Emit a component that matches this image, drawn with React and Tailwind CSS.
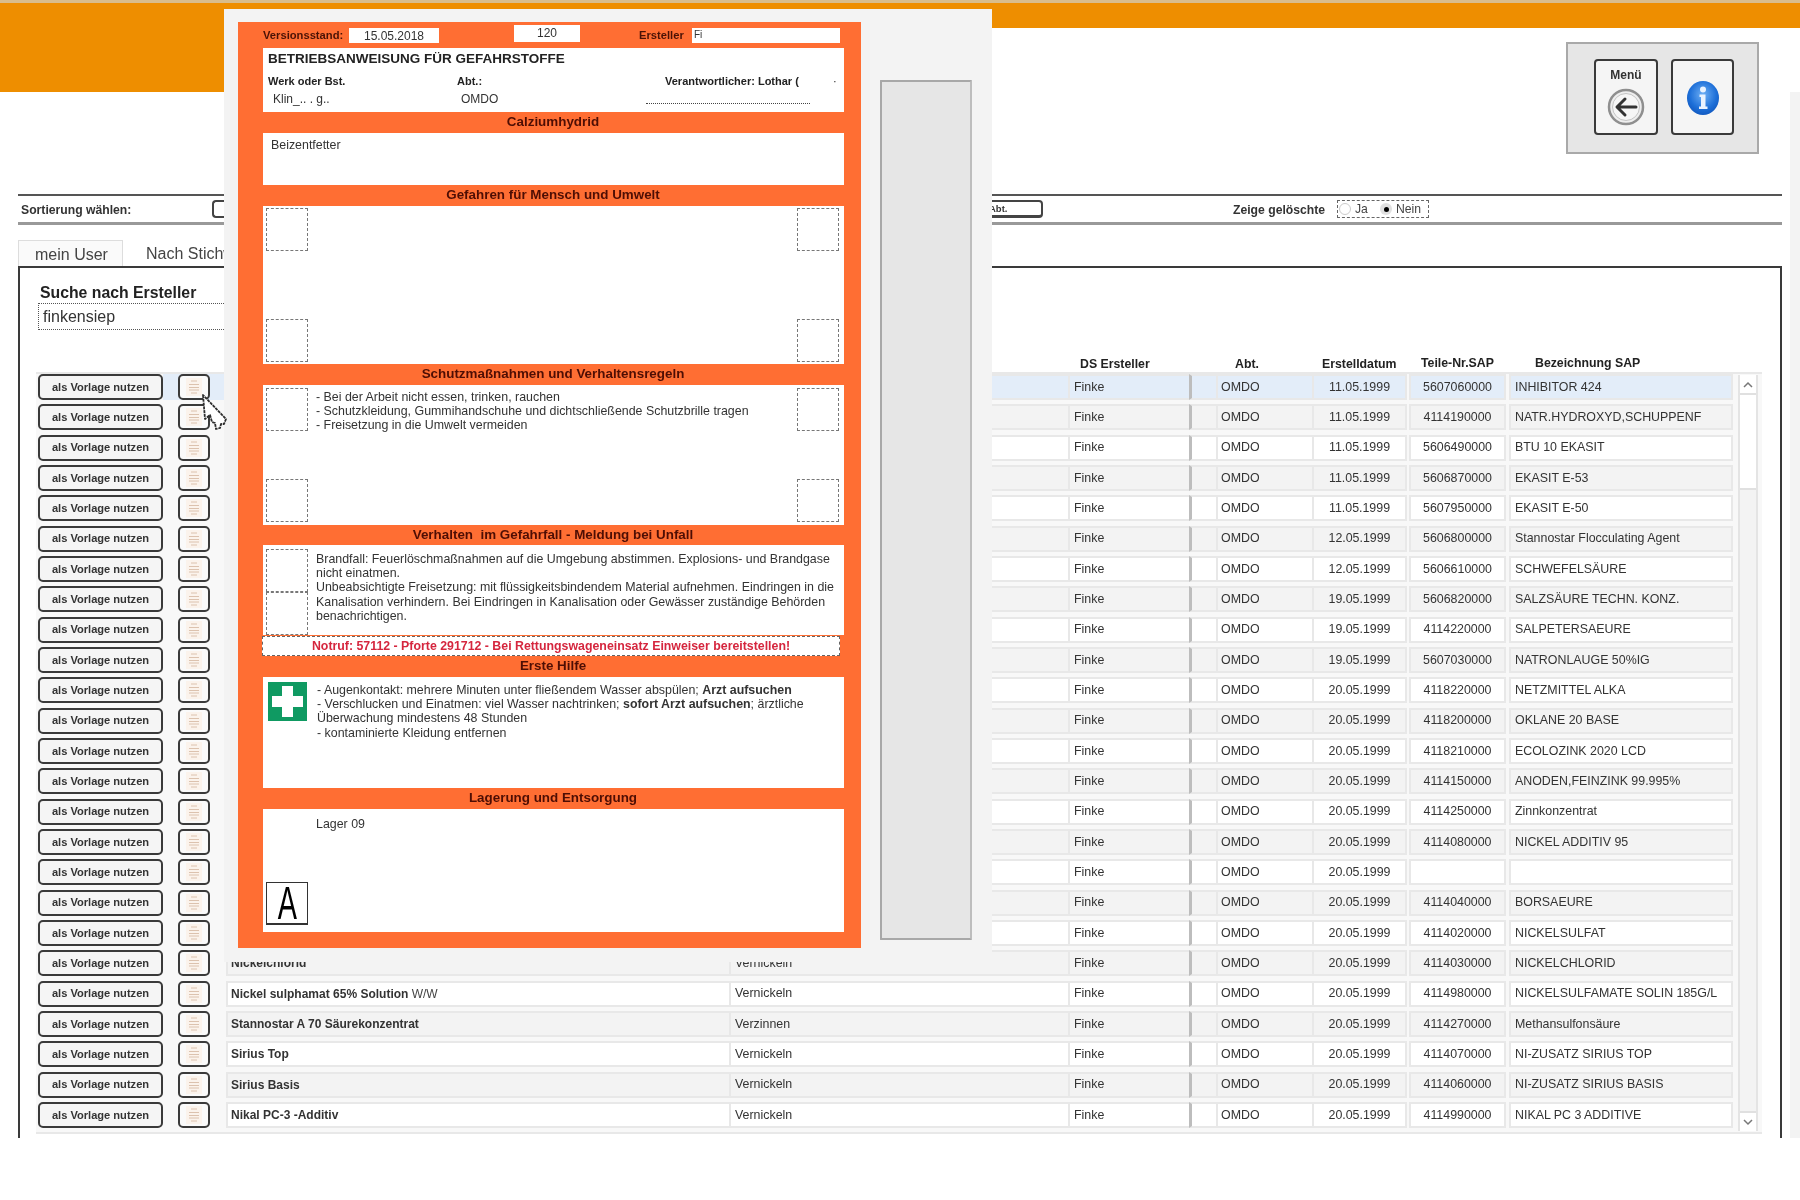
const data = [
  ["11.05.1999","5607060000","INHIBITOR 424"],
  ["11.05.1999","4114190000","NATR.HYDROXYD,SCHUPPENF"],
  ["11.05.1999","5606490000","BTU 10 EKASIT"],
  ["11.05.1999","5606870000","EKASIT E-53"],
  ["11.05.1999","5607950000","EKASIT E-50"],
  ["12.05.1999","5606800000","Stannostar Flocculating Agent"],
  ["12.05.1999","5606610000","SCHWEFELSÄURE"],
  ["19.05.1999","5606820000","SALZSÄURE TECHN. KONZ."],
  ["19.05.1999","4114220000","SALPETERSAEURE"],
  ["19.05.1999","5607030000","NATRONLAUGE 50%IG"],
  ["20.05.1999","4118220000","NETZMITTEL ALKA"],
  ["20.05.1999","4118200000","OKLANE 20 BASE"],
  ["20.05.1999","4118210000","ECOLOZINK 2020 LCD"],
  ["20.05.1999","4114150000","ANODEN,FEINZINK 99.995%"],
  ["20.05.1999","4114250000","Zinnkonzentrat"],
  ["20.05.1999","4114080000","NICKEL ADDITIV 95"],
  ["20.05.1999","",""],
  ["20.05.1999","4114040000","BORSAEURE"],
  ["20.05.1999","4114020000","NICKELSULFAT"],
  ["20.05.1999","4114030000","NICKELCHLORID","Nickelchlorid","","Vernickeln"],
  ["20.05.1999","4114980000","NICKELSULFAMATE SOLIN 185G/L","Nickel sulphamat 65% Solution"," W/W","Vernickeln"],
  ["20.05.1999","4114270000","Methansulfonsäure","Stannostar A 70 Säurekonzentrat","","Verzinnen"],
  ["20.05.1999","4114070000","NI-ZUSATZ SIRIUS TOP","Sirius Top","","Vernickeln"],
  ["20.05.1999","4114060000","NI-ZUSATZ SIRIUS BASIS","Sirius Basis","","Vernickeln"],
  ["20.05.1999","4114990000","NIKAL PC 3 ADDITIVE","Nikal PC-3 -Additiv","","Vernickeln"],
];

const font = { fontFamily: '"Liberation Sans", Arial, sans-serif' };

function DocIcon() {
  return (
    <svg width="16" height="18" viewBox="0 0 16 18" fill="none" stroke="#dcc2ae" strokeWidth="1">
      <rect x="0" y="0" width="16" height="18" fill="#fbf3ec" stroke="none" />
      <path d="M5 3h6M3 6.5h10M3 9.5h10M3 12h10M5 15h6" />
    </svg>
  );
}

function BackIcon() {
  return (
    <svg width="38" height="38" viewBox="0 0 38 38" fill="none">
      <circle cx="19" cy="19" r="17" fill="#eeeeee" stroke="#8f8f8f" strokeWidth="2.5" />
      <circle cx="19" cy="19" r="13.5" fill="#f6f6f6" stroke="#c4c4c4" strokeWidth="1" />
      <path d="M29 19H11M18 11l-8 8 8 8" stroke="#333333" strokeWidth="3" strokeLinecap="round" strokeLinejoin="round" />
    </svg>
  );
}

function InfoIcon() {
  return (
    <svg width="34" height="36" viewBox="0 0 34 36">
      <defs>
        <radialGradient id="infoBlue" cx="50%" cy="40%" r="70%">
          <stop offset="0%" stopColor="#6fb0f5" />
          <stop offset="60%" stopColor="#1d6fd8" />
          <stop offset="100%" stopColor="#0d4fb5" />
        </radialGradient>
      </defs>
      <ellipse cx="17" cy="18" rx="16" ry="17" fill="url(#infoBlue)" />
      <circle cx="17" cy="9.5" r="3" fill="#eaf3ff" />
      <path d="M13.5 14.500h6v12h2V29h-8.500v-2.500h2V17h-1.500z" fill="#eaf3ff" />
    </svg>
  );
}

function Cursor() {
  return (
    <svg width="26" height="38" viewBox="0 0 26 38" fill="#ffffff" stroke="#2e2e2e" strokeWidth="1.800" strokeDasharray="3 0.800" strokeLinejoin="round">
      <path d="M1 1l2 24 5-4 2 7 3 1 1 6 4-1 1-4 3 0 2-5z" />
    </svg>
  );
}

function Cross() {
  return (
    <svg width="39" height="39" viewBox="0 0 39 39">
      <rect width="39" height="39" fill="#0f9a62" />
      <path d="M14 4h11v10h10v11H25v10H14V25H4V14h10z" fill="#ffffff" />
    </svg>
  );
}

const Box = ({ children, solid }) => (
  <div className={`w-[42px] h-[43px] shrink-0 flex items-center justify-center border border-dashed ${solid ? "border-[#555]" : "border-[#777]"}`}>
    {children}
  </div>
);

const Title = ({ children, h = "h-[21px]" }) => (
  <div className={`${h} -ml-[1px] flex items-center justify-center font-bold text-[13.400px] text-[#4e0e04]`}>{children}</div>
);

const Line = ({ children }) => <div className="h-[14.200px] leading-[14.200px] whitespace-nowrap">{children}</div>;

function Sheet() {
  return (
    <div className="w-[623px] h-[926px] mt-[13px] ml-[14px] shrink-0 bg-[#ff6e33] pl-[25px] pr-[17px] text-[12.400px] text-[#333]">
      <div className="h-[26px] relative flex items-center font-bold text-[11.200px] text-[#4a1206]">
        <span className="w-[86px] whitespace-nowrap">Versionsstand:</span>
        <span className="w-[90px] h-[15px] bg-white text-center text-[#333] font-normal text-[12px] leading-[17px]">15.05.2018</span>
        <span className="w-[75px]" />
        <span className="w-[66px] h-[17px] -mt-[3px] bg-white text-center text-[#333] font-normal text-[12px] leading-[16px]">120</span>
        <span className="w-[59px]" />
        <span className="w-[53px]">Ersteller</span>
        <span className="w-[148px] h-[15px] bg-white text-[#333] font-normal text-[10px] leading-[13px] pl-[2px]">Fi</span>
      </div>
      <div className="h-[64px] bg-white pl-[5px] pr-[4px]">
        <div className="font-bold text-[13.500px] leading-[22px] text-[#222]">BETRIEBSANWEISUNG FÜR GEFAHRSTOFFE</div>
        <div className="flex font-bold text-[11px] mt-[4px] leading-[14px] text-[#222]">
          <span className="w-[189px]">Werk oder Bst.</span>
          <span className="w-[208px]">Abt.:</span>
          <span className="w-[140px] whitespace-nowrap">Verantwortlicher: Lothar (</span>
          <span className="ml-[28px] font-normal">·</span>
        </div>
        <div className="flex text-[12px] leading-[18px] mt-[2px] pl-[5px]">
          <span className="w-[188px]">Klin_.. . g..</span>
          <span className="w-[185px]">OMDO</span>
          <span className="w-[164px] h-[14px] border-b border-dotted border-[#444]" />
        </div>
      </div>

      <Title>Calziumhydrid</Title>
      <div className="h-[52px] bg-white pl-[8px] pt-[5px] leading-[14px]">Beizentfetter</div>

      <Title>Gefahren für Mensch und Umwelt</Title>
      <div className="h-[158px] bg-white flex justify-between px-[3px] py-[2px]">
        <div className="flex flex-col justify-between"><Box /><Box /></div>
        <div className="flex flex-col justify-between mr-[2px]"><Box /><Box /></div>
      </div>

      <Title>Schutzmaßnahmen und Verhaltensregeln</Title>
      <div className="h-[140px] bg-white flex justify-between px-[3px] py-[3px]">
        <div className="flex flex-col justify-between"><Box /><Box /></div>
        <div className="flex-1 pl-[8px] pt-[2px]">
          <Line>- Bei der Arbeit nicht essen, trinken, rauchen</Line>
          <Line>- Schutzkleidung, Gummihandschuhe und dichtschließende Schutzbrille tragen</Line>
          <Line>- Freisetzung in die Umwelt vermeiden</Line>
        </div>
        <div className="flex flex-col justify-between mr-[2px]"><Box /><Box /></div>
      </div>

      <Title h="h-[20px]">Verhalten&nbsp; im Gefahrfall - Meldung bei Unfall</Title>
      <div className="h-[90px] bg-white flex px-[3px] pt-[4px]">
        <div className="flex flex-col"><Box /><Box /></div>
        <div className="flex-1 pl-[8px] pt-[3px]">
          <Line>Brandfall: Feuerlöschmaßnahmen auf die Umgebung abstimmen. Explosions- und Brandgase</Line>
          <Line>nicht einatmen.</Line>
          <Line>Unbeabsichtigte Freisetzung: mit flüssigkeitsbindendem Material aufnehmen. Eindringen in die</Line>
          <Line>Kanalisation verhindern. Bei Eindringen in Kanalisation oder Gewässer zuständige Behörden</Line>
          <Line>benachrichtigen.</Line>
        </div>
      </div>
      <div className="h-[20px] -ml-[1px] mr-[4px] mt-[1px] bg-white border border-dashed border-[#666] flex items-center justify-center font-bold text-[12.350px] text-[#d5263e]">
        Notruf: 57112 - Pforte 291712 - Bei Rettungswageneinsatz Einweiser bereitstellen!
      </div>

      <Title>Erste Hilfe</Title>
      <div className="h-[111px] bg-white flex pl-[5px] pt-[5px]">
        <Cross />
        <div className="pl-[10px] pt-[1px]">
          <Line>- Augenkontakt: mehrere Minuten unter fließendem Wasser abspülen; <b>Arzt aufsuchen</b></Line>
          <Line>- Verschlucken und Einatmen: viel Wasser nachtrinken; <b>sofort Arzt aufsuchen</b>; ärztliche</Line>
          <Line>Überwachung mindestens 48 Stunden</Line>
          <Line>- kontaminierte Kleidung entfernen</Line>
        </div>
      </div>

      <Title>Lagerung und Entsorgung</Title>
      <div className="h-[123px] bg-white pl-[3px] pt-[6px] flex flex-col justify-between pb-[7px]">
        <div className="pl-[50px]">Lager 09</div>
        <div className="w-[42px] h-[43px] border border-[#333] border-b-2 flex items-center justify-center text-[40px] leading-[40px] text-black font-normal">
          <span className="scale-x-[0.72] scale-y-[1.15]">A</span>
        </div>
      </div>
    </div>
  );
}

function Modal() {
  return (
    <div className="absolute left-[224px] top-[9px] w-[768px] h-[953px] bg-[#f3f3f3] flex z-10">
      <Sheet />
      <div className="ml-[19px] mt-[71px] w-[92px] h-[860px] bg-[#e6e6e6] border-2 border-[#a8a8a8] border-r-[#bdbdbd] rounded-[1px]" />
    </div>
  );
}

const cols = "grid grid-cols-[125px_63px_503px_339px_121px_27px_96px_95px_2px_97px_3px_224px]";

function Row({ d, i }) {
  const sel = i === 0;
  const bg = sel ? "bg-[#e3edf9]" : i % 2 ? "bg-[#f3f3f3]" : "bg-white";
  const cell = `${bg} border-y-2 border-[#e8e8e8] flex items-center text-[12.400px] text-[#333] whitespace-nowrap overflow-hidden`;
  return (
    <div className={`${cols} h-[26px]`}>
      <button className="h-[26px] w-[125px] rounded-[5px] border-2 border-[#3a3a3a] bg-[#f5f5f5] font-bold text-[11.100px] text-[#333]">als Vorlage nutzen</button>
      <div className={`flex items-center pl-[15px] ${sel ? "bg-[#e3edf9]" : ""}`}>
        <div className="w-[32px] h-[26px] rounded-[5px] border-2 border-[#3a3a3a] bg-[#fafafa] flex items-center justify-center">
          <DocIcon />
        </div>
      </div>
      <div className={`${cell} border-l-2 pl-[3px] font-bold text-[12px] text-[#222]`}>
        {d[3]}<span className="font-normal text-[#444] whitespace-pre">{d[4]}</span>
      </div>
      <div className={`${cell} border-l-2 pl-[4px]`}>{d[5]}</div>
      <div className={`${cell} border-l-2 pl-[4px]`}>Finke</div>
      <div className={`${cell} border-l-[3px] border-l-[#bdbdbd]`} />
      <div className={`${cell} border-l-2 pl-[3px]`}>OMDO</div>
      <div className={`${cell} border-x-2 justify-center`}>{d[0]}</div>
      <div />
      <div className={`${cell} border-x-2 justify-center`}>{d[1]}</div>
      <div />
      <div className={`${cell} border-x-2 pl-[4px]`}>{d[2]}</div>
    </div>
  );
}

function Scrollbar() {
  return (
    <div className="w-[20px] ml-[5px] h-[756px] mt-[1px] flex flex-col border-x-2 border-[#e4e4e4] text-[#666]">
      <div className="h-[20px] bg-white border-b-2 border-[#e0e0e0] flex items-center justify-center">
        <svg width="10" height="7" viewBox="0 0 10 7" fill="none" stroke="#777" strokeWidth="1.500"><path d="M1 6l4-4 4 4" /></svg>
      </div>
      <div className="h-[95px] bg-white border-b-2 border-[#e0e0e0]" />
      <div className="flex-1 bg-[#f3f3f3]" />
      <div className="h-[20px] bg-white border-t-2 border-[#e0e0e0] flex items-center justify-center">
        <svg width="10" height="7" viewBox="0 0 10 7" fill="none" stroke="#777" strokeWidth="1.500"><path d="M1 1l4 4 4-4" /></svg>
      </div>
    </div>
  );
}

export default function App() {
  return (
    <div className="relative w-[1800px] h-[1200px] bg-white overflow-hidden blur-[0.4px]" style={font}>
      <div className="h-[3px] bg-[#d9bd8c]" />
      <div className="h-[25px] bg-[#ee8e00]" />
      <div className="flex">
        <div className="w-[1790px] shrink-0">
          <div className="flex justify-between h-[166px]">
            <div className="w-[224px] h-[64px] bg-[#ee8e00]" />
            <div className="w-[193px] h-[112px] mt-[14px] mr-[31px] bg-[#e6e6e6] border-2 border-[#a9a9a9] flex pl-[26px] pt-[15px] gap-[13px]">
              <div className="w-[64px] h-[76px] rounded-[4px] border-2 border-[#3a3a3a] bg-[#f5f5f5] flex flex-col items-center pt-[7px] gap-[6px] font-bold text-[12px] text-[#333]">
                <span className="leading-[14px]">Menü</span>
                <BackIcon />
              </div>
              <div className="w-[63px] h-[76px] rounded-[4px] border-2 border-[#3a3a3a] bg-[#f5f5f5] flex items-center justify-center pt-[2px]">
                <InfoIcon />
              </div>
            </div>
          </div>

          <div className="ml-[18px] w-[1764px]">
            <div className="h-[31px] border-t-2 border-b-[3px] border-t-[#555] border-b-[#999] flex items-center text-[12.200px] font-bold text-[#333]">
              <span className="pl-[3px] pt-[3px] w-[194px]">Sortierung wählen:</span>
              <div className="w-[20px] h-[18px] rounded-l-[4px] border-2 border-[#444] border-r-0 shrink-0" />
              <div className="ml-[660px] w-[151px] h-[18px] rounded-[4px] border-2 border-b-[3px] border-[#444] text-[9.500px] leading-[14px] pl-[95px] shrink-0">Abt.</div>
              <span className="ml-[190px] w-[104px] pt-[2px]">Zeige gelöschte</span>
              <div className="w-[92px] h-[18px] border border-dashed border-[#666] flex items-center font-normal text-[12.200px] text-[#444] pl-[1px]">
                <span className="w-[12px] h-[12px] rounded-full bg-white border border-[#ccc]" />
                <span className="ml-[4px] w-[25px]">Ja</span>
                <span className="w-[12px] h-[12px] rounded-full bg-[#e0e0e0] flex items-center justify-center">
                  <span className="w-[5px] h-[5px] rounded-full bg-black" />
                </span>
                <span className="ml-[4px]">Nein</span>
              </div>
            </div>

            <div className="flex h-[26px] mt-[15px] text-[16px] text-[#444] leading-[27px]">
              <div className="w-[105px] border-t border-x border-[#ddd] bg-[#fafafa] pl-[16px]">mein User</div>
              <div className="pl-[23px] whitespace-nowrap">Nach Stichwort</div>
            </div>

            <div className="h-[872px] border-t-[2px] border-x-2 border-[#3a3a3a] pl-[16px]">
              <div className="h-[84px] pt-[16px] pl-[4px]">
                <div className="font-bold text-[15.800px] leading-[18px] text-[#222]">Suche nach Ersteller</div>
                <div className="w-[240px] h-[27px] -ml-[2px] mt-[1px] border border-dotted border-[#555] pl-[4px] text-[16px] leading-[25px] text-[#333]">finkensiep</div>
              </div>
              <div className="h-[20px] flex font-bold text-[12.300px] text-[#222] ml-[2px] items-center pt-[4px]">
                <span className="ml-[1042px] w-[155px]">DS Ersteller</span>
                <span className="w-[87px]">Abt.</span>
                <span className="w-[99px]">Erstelldatum</span>
                <span className="w-[114px] -mt-[1px]">Teile-Nr.SAP</span>
                <span className="-mt-[1px]">Bezeichnung SAP</span>
              </div>
              <div className="w-[1726px] h-[762px] bg-[#f8f8f8] border-y-2 border-[#e8e8e8] flex pl-[2px]">
                <div className="grid auto-rows-[26px] gap-y-[4.330px] w-[1695px]">
                  {data.map((d, i) => <Row key={i} d={d} i={i} />)}
                </div>
                <Scrollbar />
              </div>
            </div>
          </div>
        </div>
        <div className="w-[10px] h-[1046px] mt-[64px] bg-[#f3f3f3]" />
      </div>

      <Modal />
      <div className="absolute left-[202px] top-[394px] z-20"><Cursor /></div>
    </div>
  );
}
